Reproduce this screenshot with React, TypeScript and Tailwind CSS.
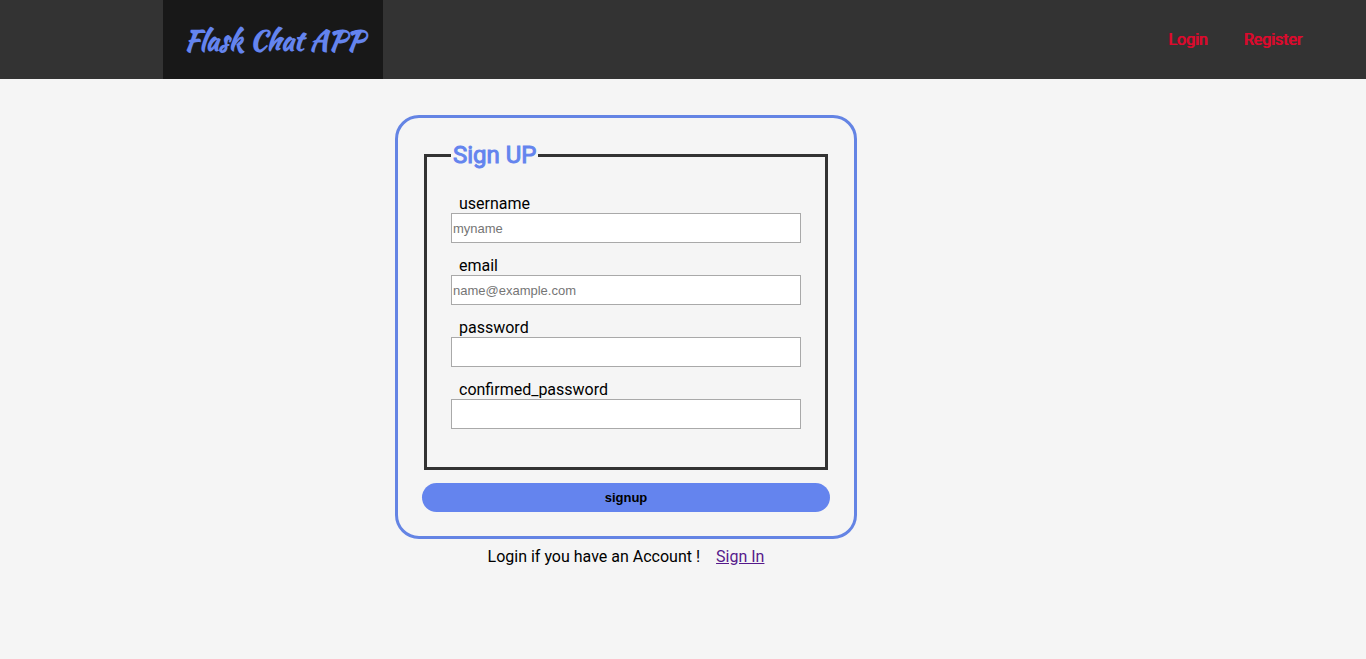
type FieldProps = {
  name: string;
  type: string;
  placeholder?: string;
};

const fields: FieldProps[] = [
  { name: "username", type: "text", placeholder: "myname" },
  { name: "email", type: "email", placeholder: "name@example.com" },
  { name: "password", type: "password" },
  { name: "confirmed_password", type: "password" },
];

function Field({ name, type, placeholder }: FieldProps) {
  return (
    <div className="flex flex-col">
      <label htmlFor={name} className="pt-0.5 pl-2 leading-[18px]">
        {name}
      </label>
      <input
        id={name}
        name={name}
        type={type}
        placeholder={placeholder}
        className="h-[30px] w-full border border-[#a9a9a9] bg-white px-px font-['Liberation_Sans',Arial,sans-serif] text-[13px] placeholder:text-[#757575]"
      />
    </div>
  );
}

function NavBar() {
  return (
    <header className="flex h-[79px] items-stretch justify-between bg-[#333333] pr-16 pl-[163px]">
      <a
        href="#"
        className="flex w-[220px] items-center justify-center bg-[#181818] pl-0.5 font-['Kaushan_Script',Lato,cursive] text-[28px] font-bold whitespace-nowrap text-[#6484ee]"
      >
        Flask Chat APP
      </a>
      <nav className="flex items-center gap-9 text-[#dc0a2d] [text-shadow:1px_0_0_currentColor]">
        <a href="#login">Login</a>
        <a href="#register">Register</a>
      </nav>
    </header>
  );
}

export default function App() {
  return (
    <div className="min-h-screen bg-[#f5f5f5] font-[Roboto,sans-serif] text-base text-black">
      <NavBar />
      <main className="flex flex-col items-center pt-9 pr-[114px]">
        <form
          className="w-full max-w-[462px] rounded-3xl border-3 border-[#6484e4] p-6"
          onSubmit={(event) => event.preventDefault()}
        >
          <fieldset className="mx-0.5 border-3 border-[#333333] px-6 pt-6 pb-[38px]">
            <legend className="px-0.5 text-2xl leading-[27px] text-[#6484ee] [-webkit-text-stroke:1px]">
              Sign UP
            </legend>
            <div className="flex flex-col gap-3">
              {fields.map((field) => (
                <Field key={field.name} {...field} />
              ))}
            </div>
          </fieldset>
          <button
            type="submit"
            className="mt-[13px] block h-[29px] w-full rounded-2xl bg-[#6484ee] font-['Liberation_Sans',Arial,sans-serif] text-[13px] font-bold"
          >
            signup
          </button>
        </form>
        <p className="mt-1.5 flex gap-4">
          <span>Login if you have an Account !</span>
          <a href="#login" className="text-[#551a8b] underline">
            Sign In
          </a>
        </p>
      </main>
    </div>
  );
}
